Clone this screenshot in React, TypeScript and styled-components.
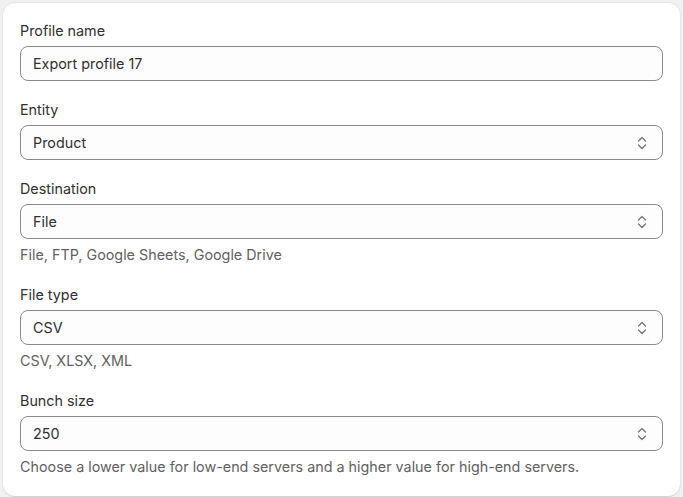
import React from "react";
import styled, { createGlobalStyle } from "styled-components";

const GlobalStyle = createGlobalStyle`
  * { box-sizing: border-box; }
  body {
    margin: 0;
    background: #f1f1f1;
    font-family: Inter, "Noto Sans", sans-serif;
    color: #303030;
  }
`;

const StPage = styled.div`
  padding: 3px;
`;

const StCard = styled.div`
  background: #ffffff;
  border-radius: 12px;
  box-shadow: 0 1px 0 0 #d4d4d4, 0 0 0 1px #e6e6e6;
  padding: 18px 17px 18px 17px;
  display: flex;
  flex-direction: column;
  gap: 19px;
`;

const StField = styled.div<{ hasHelp: boolean }>`
  display: flex;
  flex-direction: column;
  padding-bottom: ${({ hasHelp }) => (hasHelp ? "1px" : "0")};
`;

const StLabel = styled.label`
  font-size: 14.35px;
  line-height: 20px;
  margin-bottom: 5px;
`;

const StBox = styled.div`
  height: 35px;
  border: 1px solid #8a8a8a;
  border-radius: 8px;
  padding: 0 12px;
  display: flex;
  align-items: center;
  justify-content: space-between;
  font-size: 14.35px;
  color: #303030;
  background: #fdfdfd;
`;

const StHelp = styled.div`
  font-size: 14.35px;
  line-height: 20px;
  margin-top: 6px;
  color: #616161;
`;

const StChevron = styled.svg`
  width: 16px;
  height: 16px;
  margin-right: 0;
  color: #707070;
`;

const Chevrons = () => (
  <StChevron viewBox="0 0 16 16" fill="none">
    <path
      d="M4.5 6L8 2.5 11.5 6M4.5 10L8 13.5 11.5 10"
      stroke="currentColor"
      strokeWidth="1.2"
      strokeLinecap="round"
      strokeLinejoin="round"
    />
  </StChevron>
);

interface IFieldProps {
  label: string;
  value: string;
  select?: boolean;
  help?: string;
}

const Field = ({ label, value, select, help }: IFieldProps) => (
  <StField hasHelp={Boolean(help)}>
    <StLabel>{label}</StLabel>
    <StBox>
      <span>{value}</span>
      {select && <Chevrons />}
    </StBox>
    {help && <StHelp>{help}</StHelp>}
  </StField>
);

const App = () => (
  <StPage>
    <GlobalStyle />
    <StCard>
      <Field label="Profile name" value="Export profile 17" />
      <Field label="Entity" value="Product" select />
      <Field
        label="Destination"
        value="File"
        select
        help="File, FTP, Google Sheets, Google Drive"
      />
      <Field label="File type" value="CSV" select help="CSV, XLSX, XML" />
      <Field
        label="Bunch size"
        value="250"
        select
        help="Choose a lower value for low-end servers and a higher value for high-end servers."
      />
    </StCard>
  </StPage>
);

export default App;
